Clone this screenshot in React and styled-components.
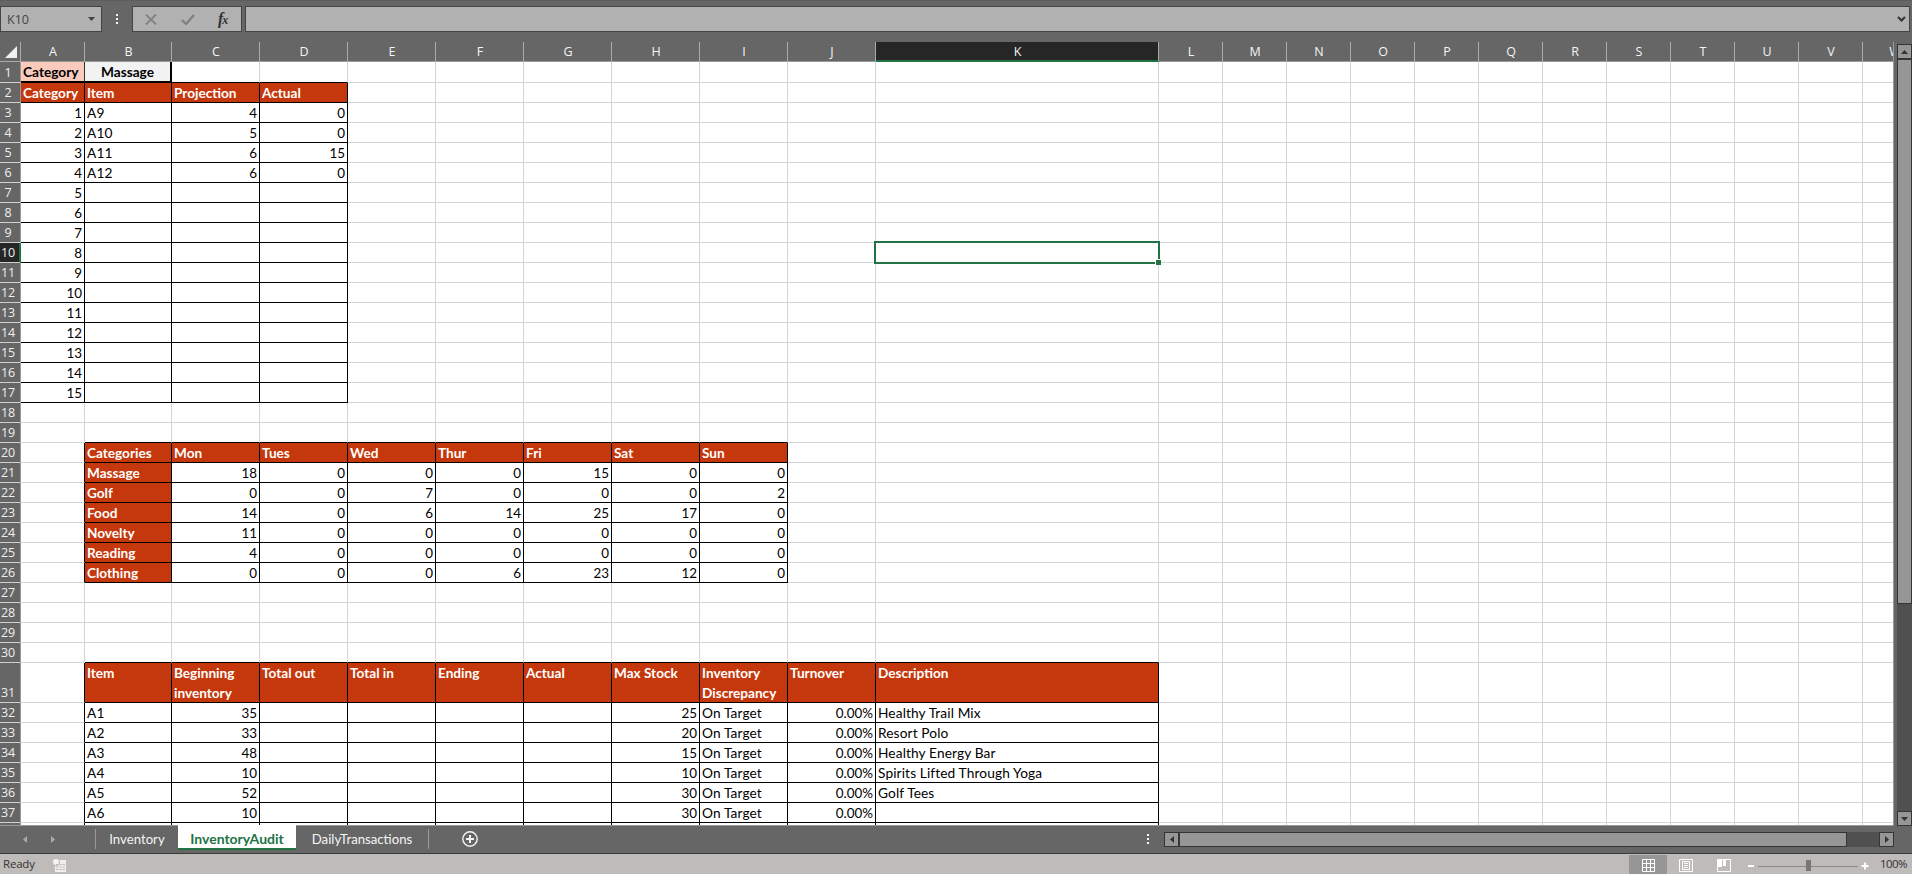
import React from "react";
import styled, { createGlobalStyle, css } from "styled-components";

const Global = createGlobalStyle`
  * { box-sizing: border-box; }
  html, body { margin: 0; padding: 0; overflow: hidden; background: #666; }
  body { font-family: Lato, "Liberation Sans", sans-serif; font-size: 13.4px; }
`;

const COLS = [
  ["A", 64], ["B", 87], ["C", 88], ["D", 88], ["E", 88], ["F", 88], ["G", 88], ["H", 88],
  ["I", 88], ["J", 88], ["K", 283], ["L", 64], ["M", 64], ["N", 64], ["O", 64], ["P", 64],
  ["Q", 64], ["R", 64], ["S", 64], ["T", 64], ["U", 64], ["V", 64], ["W", 64],
];

const Window = styled.div`
  width: 1912px; height: 874px; background: #666; overflow: hidden;
  display: flex; flex-direction: column;
`;

/* formula bar */
const FormulaBar = styled.div`
  flex: none; height: 42px; display: flex; align-items: flex-start; padding: 5px 2px 0 0;
  border-top: 1px solid #5c5c5c;
`;
const Field = styled.div`
  height: 26px; background: #b1b1b1; border: 1px solid #444;
  display: flex; align-items: center;
`;
const NameBox = styled(Field)`
  width: 102px; padding: 0 6px 0 6px; justify-content: space-between;
  color: #444; font-family: "Open Sans", sans-serif; font-size: 12.5px;
`;
const Dots = styled.div`
  height: 26px; margin-left: ${(p) => p.$left}px; width: 3px; flex: none;
  display: flex; flex-direction: column; justify-content: center; gap: 2px;
  i { width: 2px; height: 2px; background: #f4f4f4; }
`;
const FxBox = styled(Field)`
  width: 110px; margin-left: 13px; padding: 0 9px 0 12px; justify-content: space-between;
`;
const Fx = styled.span`
  font-family: "Liberation Serif", serif; font-style: italic; font-weight: bold; color: #333;
  font-size: 16px; line-height: 20px; width: 14px; white-space: nowrap; letter-spacing: -1px;
  small { font-size: 12px; }
`;
const FormulaField = styled(Field)`
  flex: 1; margin-left: 3px; justify-content: flex-end; padding-right: 3px;
`;

/* sheet */
const Middle = styled.div`
  flex: none; height: 784px; display: flex;
`;
const Sheet = styled.div`
  width: 1894px; height: 784px; overflow: hidden; border-right: 1px solid #999; position: relative;
  border-bottom: 1px solid #999; background: #fff;
`;
const HeadRow = styled.div`
  display: flex; width: 2100px; height: 20px; background: #666;
`;
const Corner = styled.div`
  width: 21px; height: 20px; border-right: 1px solid #ababab; border-bottom: 1px solid #ababab;
  display: flex; align-items: flex-end; justify-content: flex-end; padding: 0 3px 3px 0;
`;
const ColHead = styled.div`
  width: ${(p) => p.$w}px; height: 20px; color: #f5f5f5; text-align: center; line-height: 20px;
  font-family: "Open Sans", sans-serif; font-size: 12.5px; padding-left: 1px;
  border-right: 1px solid #ababab; border-bottom: 1px solid #999;
  ${(p) => p.$on && css`background: #262626; border-bottom: 2px solid #217346;`}
`;
const Row = styled.div`
  display: flex; width: 2100px; height: ${(p) => p.$h}px;
`;
const RowHead = styled.div`
  width: 21px; height: 100%; background: ${(p) => (p.$on ? "#262626" : "#666")};
  color: #f0f0f0; border-right: ${(p) => (p.$on ? "2px solid #217346" : "1px solid #999")};
  border-bottom: 1px solid #d0d0d0;
  font-family: "Open Sans", sans-serif; font-size: 12.5px; letter-spacing: -0.1px;
  display: flex; align-items: flex-end; justify-content: center; line-height: 18px;
  padding-right: ${(p) => (p.$on ? 3 : 4)}px; white-space: nowrap;
`;
const Cell = styled.div`
  width: ${(p) => p.$w}px; height: 100%; padding: 0 2px; line-height: 20px;
  border-right: 1px solid ${(p) => (p.$r ? "#000" : "#d4d4d4")};
  border-bottom: 1px solid ${(p) => (p.$b ? "#000" : "#d4d4d4")};
  text-align: ${(p) => p.$align || "left"}; color: #000; white-space: pre;
  font-size: ${(p) => (p.$align === "right" ? 13.4 : 13.7)}px;
  letter-spacing: ${(p) => (p.$align || p.$head || p.$kind ? 0 : 0.12)}px;
  ${(p) => p.$head && css`background: #c5370c; color: #fff; font-weight: bold; font-size: 13.6px;`}
  ${(p) => p.$kind === "label" && css`background: #f9cbbd; font-weight: bold; border-right-color: #333; border-bottom: 2px solid #000;`}
  ${(p) => p.$kind === "input" && css`background: #f2f2f2; font-weight: bold; border-right: 2px solid #000; border-bottom: 2px solid #000;`}
`;
const Selection = styled.div`
  position: absolute; left: 874px; top: 199px; width: 286px; height: 23px; border: 2px solid #217346;
  &::after {
    content: ""; position: absolute; right: -3px; bottom: -3px; width: 6px; height: 6px;
    box-sizing: border-box; background: #217346; border: 1px solid #fff; border-right: 0; border-bottom: 0;
  }
`;

/* scrollbars */
const VScroll = styled.div`
  width: 15px; height: 782px; margin: 2px 0 0 3px; display: flex; flex-direction: column;
  background: #505050;
`;
const ScrollBtn = styled.div`
  flex: none; width: 15px; height: 15px; background: #969696; border: 1px solid #353535;
  display: flex; align-items: center; justify-content: center;
`;
const VThumb = styled.div`
  height: 545px; background: #969696; border: 1px solid #353535;
`;
const Spacer = styled.div`flex: 1;`;

/* tab bar */
const TabBar = styled.div`
  flex: none; height: 28px; display: flex; align-items: flex-start; border-bottom: 1px solid #3b3b3b;
`;
const NavArrows = styled.div`
  width: 96px; height: 20px; margin-top: 3px; border-right: 1px solid #999;
  display: flex; align-items: center; padding: 0 0 0 23px; gap: 24px;
`;
const Tab = styled.div`
  width: ${(p) => p.$w}px; text-align: center; color: #f5f5f5; font-size: 13.2px; line-height: 26px; height: 27px;
  ${(p) => p.$on && css`
    background: #fff; color: #217346; font-weight: bold; font-size: 14px; height: 25px; margin-top: -1px;
    line-height: 28px; border-bottom: 2px solid #217346; position: relative;
  `}
`;
const TabEnd = styled.div`width: 1px; height: 20px; margin-top: 3px; background: #999;`;
const Plus = styled.svg`margin: 5px 0 0 33px;`;
const HScroll = styled.div`
  width: 730px; height: 15px; margin: 6px 18px 0 14px; background: #505050; display: flex; flex: none;
`;
const HThumb = styled.div`
  width: 668px; height: 15px; background: #969696; border: 1px solid #353535;
`;

/* status bar */
const Status = styled.div`
  flex: 1; background: #bfbbb8; display: flex; align-items: center;
  font-family: "Open Sans", sans-serif; font-size: 11.5px; color: #333; line-height: 20px;
`;
const Ready = styled.span`width: 53px; padding-left: 3px; letter-spacing: -0.2px; height: 22px;`;
const ViewBtn = styled.div`
  width: 38px; height: 21px; display: flex; align-items: center; justify-content: center;
  background: ${(p) => (p.$on ? "#969696" : "transparent")};
`;
const ZoomLabel = styled.span`width: 42px; letter-spacing: -0.6px; padding-left: 10px; height: 22px;`;

const H = (t) => ({ t, head: 1 });
const N = (t) => ({ t: String(t), align: "right" });
const cells = {};
const put = (row, start, list) =>
  list.forEach((c, i) => { cells[`${row}:${start + i}`] = { box: 1, ...(typeof c === "string" ? { t: c } : c) }; });

cells["1:0"] = { t: "Category", kind: "label" };
cells["1:1"] = { t: "Massage", kind: "input", align: "center" };
put(2, 0, [H("Category"), H("Item"), H("Projection"), H("Actual")]);
const projection = [["A9", 4, 0], ["A10", 5, 0], ["A11", 6, 15], ["A12", 6, 0]];
for (let i = 0; i < 15; i++) {
  const p = projection[i] || ["", "", ""];
  put(i + 3, 0, [N(i + 1), p[0], N(p[1]), N(p[2])]);
}
put(20, 1, ["Categories", "Mon", "Tues", "Wed", "Thur", "Fri", "Sat", "Sun"].map(H));
[
  ["Massage", 18, 0, 0, 0, 15, 0, 0],
  ["Golf", 0, 0, 7, 0, 0, 0, 2],
  ["Food", 14, 0, 6, 14, 25, 17, 0],
  ["Novelty", 11, 0, 0, 0, 0, 0, 0],
  ["Reading", 4, 0, 0, 0, 0, 0, 0],
  ["Clothing", 0, 0, 0, 6, 23, 12, 0],
].forEach(([name, ...v], i) => put(21 + i, 1, [H(name), ...v.map(N)]));
put(31, 1, ["Item", "Beginning\ninventory", "Total out", "Total in", "Ending", "Actual", "Max Stock", "Inventory\nDiscrepancy", "Turnover", "Description"].map(H));
[
  ["A1", 35, 25, "Healthy Trail Mix"], ["A2", 33, 20, "Resort Polo"], ["A3", 48, 15, "Healthy Energy Bar"],
  ["A4", 10, 10, "Spirits Lifted Through Yoga"], ["A5", 52, 30, "Golf Tees"], ["A6", 10, 30, ""],
].forEach(([a, b, m, d], i) => put(32 + i, 1, [a, N(b), "", "", "", "", N(m), "On Target", N("0.00%"), d]));
put(38, 1, Array(10).fill(""));

const boxed = (r, c) => cells[`${r}:${c}`]?.box;
const rowHeight = (r) => (r === 1 ? 21 : r === 31 ? 40 : 20);

function SheetCell({ r, c, w }) {
  const d = cells[`${r}:${c}`] || {};
  return (
    <Cell $w={w} $head={d.head} $kind={d.kind} $align={d.align}
      $r={d.box || boxed(r, c + 1)} $b={d.box || boxed(r + 1, c)}>{d.t}</Cell>
  );
}

const Tri = ({ dir, fill = "#333" }) => {
  const pts = { up: "0,4 3.5,0 7,4", down: "0,0 7,0 3.5,4", left: "4,0 4,7 0,3.5", right: "0,0 4,3.5 0,7" }[dir];
  const vert = dir === "up" || dir === "down";
  return (
    <svg width={vert ? 7 : 4} height={vert ? 4 : 7} viewBox={vert ? "0 0 7 4" : "0 0 4 7"}>
      <polygon points={pts} fill={fill} />
    </svg>
  );
};

export default function App() {
  return (
    <Window>
      <Global />
      <FormulaBar>
        <NameBox>K10<Tri dir="down" fill="#444" /></NameBox>
        <Dots $left={14}><i /><i /><i /></Dots>
        <FxBox>
          <svg width="12" height="11" viewBox="0 0 12 11"><path d="M1 .5l10 10M11 .5L1 10.5" stroke="#808080" strokeWidth="1.8" /></svg>
          <svg width="14" height="11" viewBox="0 0 14 11"><path d="M1 6l4 4L13 1" stroke="#808080" strokeWidth="2.2" fill="none" /></svg>
          <Fx>f<small>x</small></Fx>
        </FxBox>
        <FormulaField>
          <svg width="9" height="7" viewBox="0 0 9 7"><path d="M1 1l3.5 3.5L8 1" stroke="#333" strokeWidth="2" fill="none" /></svg>
        </FormulaField>
      </FormulaBar>
      <Middle>
        <Sheet>
          <HeadRow>
            <Corner><svg width="12" height="12"><polygon points="12,0 12,12 0,12" fill="#f0f0f0" /></svg></Corner>
            {COLS.map(([n, w]) => <ColHead key={n} $w={w} $on={n === "K"}>{n}</ColHead>)}
          </HeadRow>
          {Array.from({ length: 37 }, (_, i) => i + 1).map((r) => (
            <Row key={r} $h={rowHeight(r)}>
              <RowHead $on={r === 10}>{r}</RowHead>
              {COLS.map(([n, w], c) => <SheetCell key={n} r={r} c={c} w={w} />)}
            </Row>
          ))}
          <Row $h={20}>
            <RowHead />
            {COLS.map(([n, w], c) => <SheetCell key={n} r={38} c={c} w={w} />)}
          </Row>
          <Selection />
        </Sheet>
        <VScroll>
          <ScrollBtn><Tri dir="up" /></ScrollBtn>
          <VThumb />
          <Spacer />
          <ScrollBtn><Tri dir="down" /></ScrollBtn>
        </VScroll>
      </Middle>
      <TabBar>
        <NavArrows><Tri dir="left" fill="#aaa" /><Tri dir="right" fill="#aaa" /></NavArrows>
        <Tab $w={82}>Inventory</Tab>
        <Tab $w={118} $on>InventoryAudit</Tab>
        <Tab $w={132}>DailyTransactions</Tab>
        <TabEnd />
        <Plus width="16" height="16" viewBox="0 0 16 16">
          <circle cx="8" cy="8" r="7.2" fill="none" stroke="#f5f5f5" strokeWidth="1.4" />
          <path d="M8 4v8M4 8h8" stroke="#f5f5f5" strokeWidth="2" />
        </Plus>
        <Spacer />
        <Dots $left={0}><i /><i /><i /></Dots>
        <HScroll>
          <ScrollBtn><Tri dir="left" /></ScrollBtn>
          <HThumb />
          <Spacer />
          <ScrollBtn><Tri dir="right" /></ScrollBtn>
        </HScroll>
      </TabBar>
      <Status>
        <Ready>Ready</Ready>
        <svg width="13" height="13" viewBox="0 0 13 13">
          <path d="M2 1h11v12H2z" fill="#eee" />
          <circle cx="3" cy="3" r="3.6" fill="#f4f4f4" stroke="#bfbbb8" strokeWidth="1" />
          <path d="M3 5.5h9M3 8h9M3 10.5h9" stroke="#bfbbb8" strokeWidth="1.2" strokeDasharray="2.3 1" />
        </svg>
        <Spacer />
        <ViewBtn $on><svg width="13" height="13"><path d="M.5.5h12v12H.5zM4.5 0v13M8.5 0v13M0 4.5h13M0 8.5h13" stroke="#fff" fill="none" /></svg></ViewBtn>
        <ViewBtn><svg width="14" height="13"><path d="M.5.5h13v12H.5zM3.5 2.5h7v8h-7zM5 4.5h4M5 6.5h4M5 8.5h4" stroke="#fff" fill="none" /></svg></ViewBtn>
        <ViewBtn><svg width="14" height="13"><path d="M.5.5h13v12H.5z" stroke="#fff" fill="none" /><path d="M1 1h4v7H1zM6 1h3v6H6z" fill="#fff" /></svg></ViewBtn>
        <svg width="127" height="13" viewBox="0 0 127 13">
          <path d="M5 7h6M118.500 7h7M122 3.500v7" stroke="#fff" strokeWidth="2" />
          <path d="M15 7.500h100" stroke="#8a8888" />
          <rect x="63" y="1" width="5" height="11" fill="#777" />
        </svg>
        <ZoomLabel>100%</ZoomLabel>
      </Status>
    </Window>
  );
}
